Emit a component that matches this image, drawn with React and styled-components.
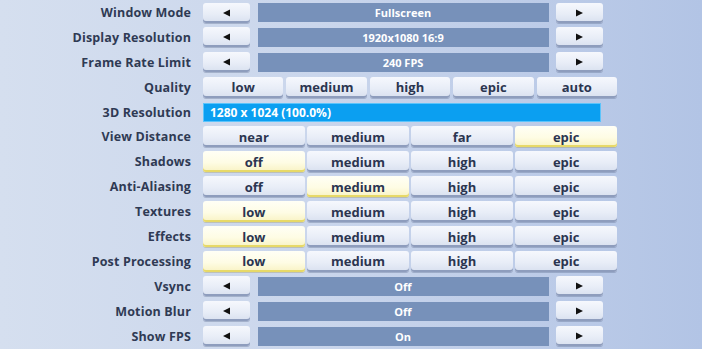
import React from "react";
import styled, { createGlobalStyle, css } from "styled-components";

const Global = createGlobalStyle`
  html, body { margin: 0; padding: 0; }
  body {
    width: 702px;
    height: 349px;
    overflow: hidden;
    background: linear-gradient(90deg, #d5dfef 0%, #cad6ec 45%, #bdcce8 75%, #b2c4e5 100%);
    font-family: "Open Sans", "DejaVu Sans", sans-serif;
  }
`;

const Page = styled.div`
  display: flex;
  flex-direction: column;
  gap: 3.9px;
  padding-top: 2px;
`;

const Row = styled.div`
  display: grid;
  grid-template-columns: 191px 414px;
  column-gap: 12px;
  height: 21px;
  align-items: center;
`;

const Label = styled.div`
  text-align: right;
  font-weight: 700;
  font-size: 12.5px;
  color: #2f3a54;
  white-space: nowrap;
  letter-spacing: 0.15px;
`;

const buttonBase = css`
  height: 21px;
  box-sizing: border-box;
  border-radius: 3px;
  display: flex;
  align-items: center;
  justify-content: center;
  background: linear-gradient(180deg, #f6f8fd 0%, #e8edf7 55%, #d8e0ef 100%);
  box-shadow: inset 0 -2px 0 #8e9dbd, 0 1px 0 rgba(90, 105, 140, 0.35);
`;

const Option = styled.div`
  ${buttonBase}
  font-weight: 700;
  font-size: 13px;
  color: #2b3550;
  ${(p) =>
    p.$active &&
    css`
      background: linear-gradient(180deg, #fffff6 0%, #fefce4 55%, #f8f2c2 100%);
      box-shadow: inset 0 -2px 0 #e7d968, 0 1px 0 rgba(160, 150, 80, 0.35);
    `}
`;

const OptionGroup = styled.div`
  display: grid;
  grid-template-columns: repeat(${(p) => p.$count}, 1fr);
  column-gap: ${(p) => (p.$count === 5 ? 3 : 2.5)}px;
`;

const Selector = styled.div`
  display: grid;
  grid-template-columns: 47px 291px 47px;
  column-gap: 7.5px;
  align-items: center;
`;

const ArrowButton = styled.div`
  ${buttonBase}
  height: 20px;
`;

const ValueBar = styled.div`
  height: 19px;
  background: #7791ba;
  color: #ffffff;
  font-weight: 700;
  font-size: 11px;
  display: flex;
  align-items: center;
  justify-content: center;
`;

const SliderBar = styled.div`
  width: 398px;
  height: 19px;
  box-sizing: border-box;
  background: #0b9ff1;
  border: 1px solid #5cc4fb;
  color: #ffffff;
  font-weight: 700;
  font-size: 12px;
  display: flex;
  align-items: center;
  padding-left: 6px;
`;

const Arrow = ({ dir }) => (
  <svg width="9" height="8" viewBox="0 0 9 8">
    {dir === "left" ? (
      <polygon points="8,0.5 8,7.5 1,4" fill="#111" />
    ) : (
      <polygon points="1,0.5 1,7.5 8,4" fill="#111" />
    )}
  </svg>
);

const SelectRow = ({ label, value }) => (
  <Row>
    <Label>{label}</Label>
    <Selector>
      <ArrowButton>
        <Arrow dir="left" />
      </ArrowButton>
      <ValueBar>{value}</ValueBar>
      <ArrowButton>
        <Arrow dir="right" />
      </ArrowButton>
    </Selector>
  </Row>
);

const OptionRow = ({ label, options, active }) => (
  <Row>
    <Label>{label}</Label>
    <OptionGroup $count={options.length}>
      {options.map((o, i) => (
        <Option key={o} $active={i === active}>
          {o}
        </Option>
      ))}
    </OptionGroup>
  </Row>
);

const four = ["low", "medium", "high", "epic"];

export default function App() {
  return (
    <>
      <Global />
      <Page>
        <SelectRow label="Window Mode" value="Fullscreen" />
        <SelectRow label="Display Resolution" value="1920x1080 16:9" />
        <SelectRow label="Frame Rate Limit" value="240 FPS" />
        <OptionRow label="Quality" options={["low", "medium", "high", "epic", "auto"]} active={-1} />
        <Row>
          <Label>3D Resolution</Label>
          <SliderBar>1280 x 1024 (100.0%)</SliderBar>
        </Row>
        <OptionRow label="View Distance" options={["near", "medium", "far", "epic"]} active={3} />
        <OptionRow label="Shadows" options={["off", "medium", "high", "epic"]} active={0} />
        <OptionRow label="Anti-Aliasing" options={["off", "medium", "high", "epic"]} active={1} />
        <OptionRow label="Textures" options={four} active={0} />
        <OptionRow label="Effects" options={four} active={0} />
        <OptionRow label="Post Processing" options={four} active={0} />
        <SelectRow label="Vsync" value="Off" />
        <SelectRow label="Motion Blur" value="Off" />
        <SelectRow label="Show FPS" value="On" />
      </Page>
    </>
  );
}
